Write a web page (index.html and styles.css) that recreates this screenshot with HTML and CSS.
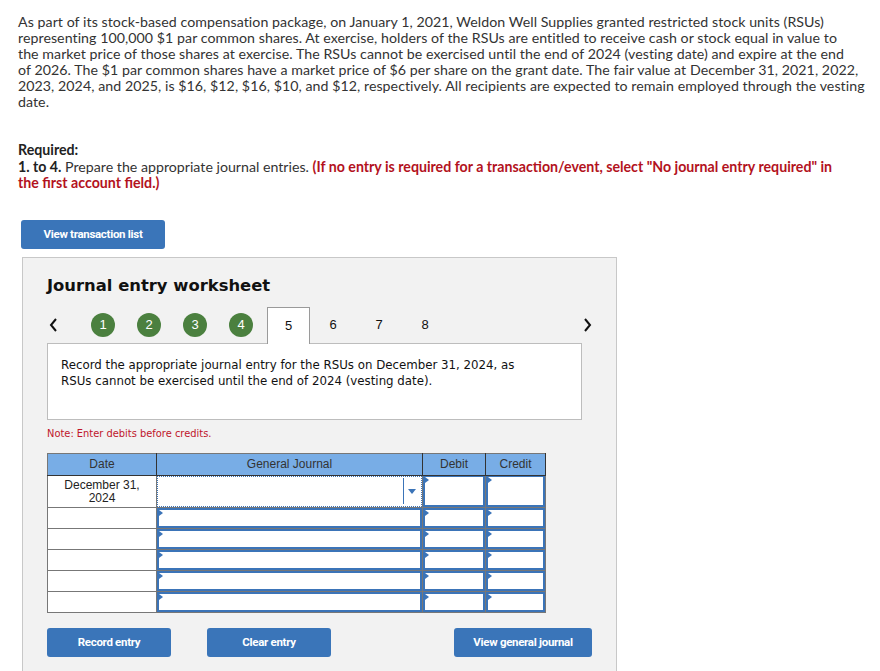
FILE: index.html
```html
<!DOCTYPE html>
<html lang="en">
<head>
  <meta charset="UTF-8">
  <title>Journal entry worksheet</title>
  <link rel="stylesheet" href="styles.css">
</head>
<body>
  <div class="page">
    <p class="question">As part of its stock-based compensation package, on January 1, 2021, Weldon Well Supplies granted restricted stock units (RSUs)<br>
    representing 100,000 $1 par common shares. At exercise, holders of the RSUs are entitled to receive cash or stock equal in value to<br>
    the market price of those shares at exercise. The RSUs cannot be exercised until the end of 2024 (vesting date) and expire at the end<br>
    of 2026. The $1 par common shares have a market price of $6 per share on the grant date. The fair value at December 31, 2021, 2022,<br>
    2023, 2024, and 2025, is $16, $12, $16, $10, and $12, respectively. All recipients are expected to remain employed through the vesting<br>
    date.</p>

    <div class="required">
      <div class="req-title">Required:</div>
      <div><b>1. to 4.</b> Prepare the appropriate journal entries. <span class="warn">(If no entry is required for a transaction/event, select "No journal entry required" in<br>
      the first account field.)</span></div>
    </div>

    <button class="btn btn-list">View transaction list</button>

    <div class="worksheet">
      <h2 class="ws-title">Journal entry worksheet</h2>

      <div class="steps">
        <span class="arrow arrow-left">
          <svg width="9" height="14" viewBox="0 0 9 14"><polyline points="7,1 2,7 7,13" fill="none" stroke="#111" stroke-width="2"/></svg>
        </span>
        <span class="step"><span class="done">1</span></span>
        <span class="step"><span class="done">2</span></span>
        <span class="step"><span class="done">3</span></span>
        <span class="step"><span class="done">4</span></span>
        <span class="step step-active">5</span>
        <span class="step">6</span>
        <span class="step">7</span>
        <span class="step">8</span>
        <span class="arrow arrow-right">
          <svg width="9" height="14" viewBox="0 0 9 14"><polyline points="2,1 7,7 2,13" fill="none" stroke="#111" stroke-width="2"/></svg>
        </span>
      </div>

      <div class="task">
        Record the appropriate journal entry for the RSUs on December 31, 2024, as<br>
        RSUs cannot be exercised until the end of 2024 (vesting date).
      </div>

      <div class="note">Note: Enter debits before credits.</div>

      <table class="journal">
        <thead>
          <tr>
            <th class="c-date">Date</th>
            <th class="c-acct">General Journal</th>
            <th class="c-num">Debit</th>
            <th class="c-num2">Credit</th>
          </tr>
        </thead>
        <tbody>
          <tr class="first">
            <td class="date">December 31,<br>2024</td>
            <td class="cell"><div class="select"><span class="caret"></span></div></td>
            <td class="cell"><div class="box"></div></td>
            <td class="cell"><div class="box"></div></td>
          </tr>
          <tr>
            <td class="date"></td>
            <td class="cell"><div class="box"></div></td>
            <td class="cell"><div class="box"></div></td>
            <td class="cell"><div class="box"></div></td>
          </tr>
          <tr>
            <td class="date"></td>
            <td class="cell"><div class="box"></div></td>
            <td class="cell"><div class="box"></div></td>
            <td class="cell"><div class="box"></div></td>
          </tr>
          <tr>
            <td class="date"></td>
            <td class="cell"><div class="box"></div></td>
            <td class="cell"><div class="box"></div></td>
            <td class="cell"><div class="box"></div></td>
          </tr>
          <tr>
            <td class="date"></td>
            <td class="cell"><div class="box"></div></td>
            <td class="cell"><div class="box"></div></td>
            <td class="cell"><div class="box"></div></td>
          </tr>
          <tr>
            <td class="date"></td>
            <td class="cell"><div class="box"></div></td>
            <td class="cell"><div class="box"></div></td>
            <td class="cell"><div class="box"></div></td>
          </tr>
        </tbody>
      </table>

      <div class="actions">
        <button class="btn btn-record">Record entry</button>
        <button class="btn btn-clear">Clear entry</button>
        <button class="btn btn-view">View general journal</button>
      </div>
    </div>
  </div>
</body>
</html>
```

FILE: styles.css
```css
body {
  margin: 0;
  background: #fff;
  color: #333;
  font-family: Lato, "Liberation Sans", sans-serif;
}

.page {
  padding: 14px 0 0 18px;
  width: 850px;
}

.question {
  margin: 0;
  font-size: 14.2px;
  line-height: 16px;
  letter-spacing: 0.05px;
  white-space: nowrap;
}

.required {
  margin-top: 32px;
  font-size: 14.2px;
  line-height: 16.5px;
  white-space: nowrap;
}

.req-title {
  font-weight: bold;
  color: #222;
}

.required b {
  color: #222;
}

.warn {
  color: #b3121d;
  font-weight: bold;
}

.btn {
  display: block;
  border: none;
  border-radius: 3px;
  background: #3a75b9;
  color: #fff;
  font-family: Roboto, "Liberation Sans", sans-serif;
  font-weight: bold;
  font-size: 11.5px;
  letter-spacing: -0.3px;
  height: 29px;
  padding: 0;
  cursor: pointer;
}

.btn-list {
  margin: 28px 0 0 3px;
  width: 144px;
}

.worksheet {
  margin: 8px 0 0 4px;
  width: 595px;
  background: #f2f2f2;
  border: 1px solid #c8c8c8;
  border-bottom: none;
  padding: 0 0 20px 24px;
  box-sizing: border-box;
  font-family: "DejaVu Sans", Verdana, sans-serif;
}

.ws-title {
  margin: 0;
  padding-top: 17px;
  font-size: 16.4px;
  line-height: 22px;
  color: #111;
}

.steps {
  display: flex;
  align-items: center;
  height: 36px;
  margin-top: 10px;
  width: 545px;
  font-family: "Liberation Sans", Arial, sans-serif;
  font-size: 13px;
  color: #111;
}

.arrow {
  display: flex;
  align-items: center;
}

.arrow-left {
  width: 33px;
  padding-left: 2px;
  box-sizing: border-box;
}

.arrow-right {
  margin-left: auto;
}

.step {
  width: 46px;
  display: flex;
  justify-content: center;
  align-items: center;
}

.done {
  width: 24px;
  height: 24px;
  border-radius: 50%;
  background: #4b803f;
  color: #fff;
  display: flex;
  justify-content: center;
  align-items: center;
  font-size: 13px;
}

.step-active {
  width: 43px;
  margin-left: 3px;
  height: 37px;
  margin-top: 1px;
  background: #fff;
  border: 1px solid #9a9a9a;
  border-bottom: none;
  box-sizing: border-box;
  position: relative;
  z-index: 1;
}

.task {
  width: 535px;
  height: 77px;
  box-sizing: border-box;
  background: #fff;
  border: 1px solid #bdbdbd;
  padding: 13px 13px;
  font-size: 11.8px;
  line-height: 16px;
  color: #111;
}

.note {
  margin-top: 8px;
  font-size: 9.9px;
  color: #c0152a;
  line-height: 12px;
}

.journal {
  margin-top: 13px;
  border-collapse: collapse;
  font-family: "Liberation Sans", Arial, sans-serif;
  font-size: 12px;
  background: #fff;
  border: 1px solid #777;
}

.journal th {
  background: #78ade6;
  color: #333;
  font-weight: normal;
  height: 21px;
  padding: 0;
  border-right: 1px solid #333;
  border-bottom: 1px solid #333;
}

.c-date { width: 108px; }
.c-acct { width: 265px; }
.c-num { width: 62px; }
.c-num2 { width: 59px; }

.journal td {
  padding: 0;
  height: 20px;
  border: 1px solid #777;
}

.journal tr.first td {
  height: 31px;
}

.journal td.date {
  text-align: center;
  vertical-align: top;
  line-height: 13px;
  color: #222;
}

.journal tr.first td.date {
  height: 28px;
  padding-top: 3px;
}

.journal td.cell {
  position: relative;
}

.box {
  position: relative;
  height: 100%;
  min-height: 17px;
  border: 2px solid #3b74b8;
  box-sizing: border-box;
}

tr.first .box {
  min-height: 29px;
  border-width: 1px 2px 2px 2px;
}

.box::before {
  content: "";
  position: absolute;
  left: 0;
  top: 0;
  border-left: 4px solid #3b74b8;
  border-top: 3px solid transparent;
  border-bottom: 3px solid transparent;
}

.select {
  position: relative;
  min-height: 29px;
  height: 100%;
  border: 1px dotted #3b74b8;
  box-sizing: border-box;
}

.select::after {
  content: "";
  position: absolute;
  right: 17px;
  top: 1px;
  height: 26px;
  border-left: 1px solid #3b74b8;
}

.caret {
  position: absolute;
  right: 5px;
  top: 12px;
  border-top: 5px solid #3b74b8;
  border-left: 4px solid transparent;
  border-right: 4px solid transparent;
}

.actions {
  display: flex;
  margin-top: 15px;
}

.btn-record,
.btn-clear {
  width: 124px;
  margin-right: 36px;
}

.btn-view {
  width: 138px;
  margin-left: 87px;
}
```
